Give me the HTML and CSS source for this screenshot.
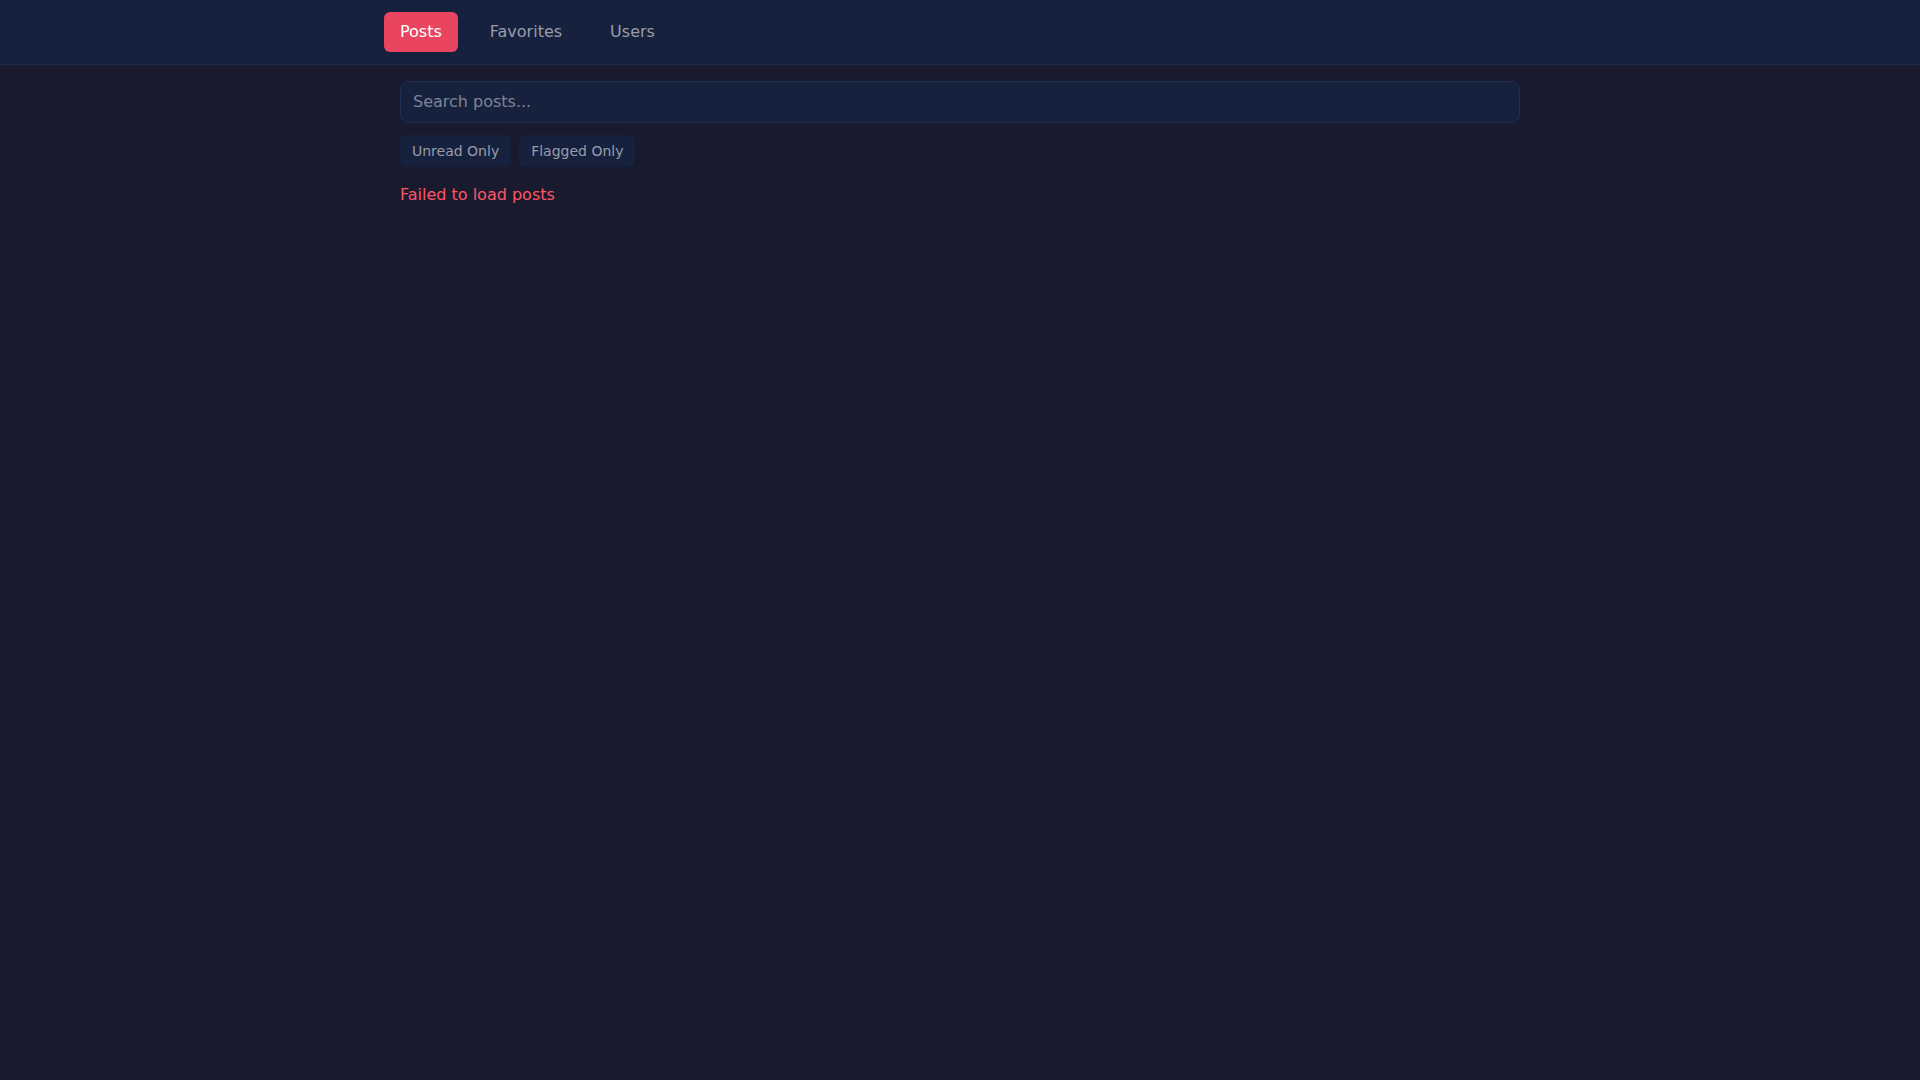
FILE: index.html
```html
<!DOCTYPE html>
<html lang="en">
<head>
<meta charset="utf-8">
<title>Posts</title>
<link rel="stylesheet" href="styles.css">
</head>
<body>
<nav class="navbar">
  <div class="nav-inner">
    <a class="nav-link active" href="#">Posts</a>
    <a class="nav-link" href="#">Favorites</a>
    <a class="nav-link" href="#">Users</a>
  </div>
</nav>
<main class="main">
  <input class="search" type="text" placeholder="Search posts...">
  <div class="filters">
    <button class="filter-btn">Unread Only</button>
    <button class="filter-btn">Flagged Only</button>
  </div>
  <p class="error">Failed to load posts</p>
</main>
</body>
</html>
```
FILE: styles.css
```css
* { box-sizing: border-box; }
html, body {
  margin: 0;
  padding: 0;
  background: #1a1a2e;
  font-family: "DejaVu Sans", sans-serif;
  color: #e0e0e0;
  min-height: 100vh;
}
.navbar {
  background: #16213e;
  border-bottom: 1px solid #1d2b4d;
  height: 65px;
}
.nav-inner {
  max-width: 1152px;
  margin: 0 auto;
  height: 64px;
  display: flex;
  align-items: center;
  gap: 16px;
}
.nav-link {
  display: block;
  padding: 8px 16px;
  font-size: 16px;
  line-height: 24px;
  color: #9a9ca8;
  text-decoration: none;
  border-radius: 6px;
}
.nav-link.active {
  background: #e94560;
  color: #ffffff;
}
.main {
  max-width: 1152px;
  margin: 0 auto;
  padding: 16px 16px;
}
.search {
  display: block;
  width: 100%;
  height: 42px;
  padding: 7px 12px 9px;
  font-family: "DejaVu Sans", sans-serif;
  font-size: 16px;
  line-height: 24px;
  background: #16213e;
  border: 1px solid #1f2d52;
  border-radius: 8px;
  color: #e0e0e0;
  outline: none;
}
.search::placeholder { color: #7f8494; }
.filters {
  display: flex;
  gap: 8px;
  margin-top: 12px;
}
.filter-btn {
  font-family: "DejaVu Sans", sans-serif;
  font-size: 14px;
  line-height: 20px;
  padding: 6px 12px;
  background: #16213e;
  color: #9a9ca8;
  border: none;
  border-radius: 6px;
  cursor: pointer;
}
.error {
  margin: 16px 0 0;
  font-size: 16px;
  line-height: 24px;
  color: #ff5566;
}
```
